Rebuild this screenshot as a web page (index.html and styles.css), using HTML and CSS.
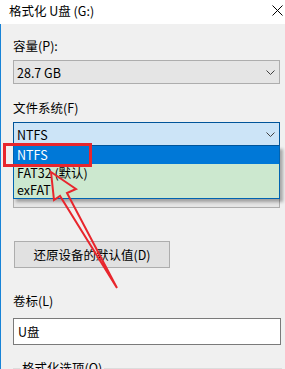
FILE: index.html
```html
<!DOCTYPE html>
<html lang="zh-CN">
<head>
    <meta charset="UTF-8">
    <title>格式化 U盘 (G:)</title>
    <link rel="stylesheet" href="styles.css">
</head>
<body>
    <div class="titlebar">
        <span class="title">格式化 U盘 (G:)</span>
        <svg class="close" width="11" height="11" viewBox="0 0 11 11">
            <path d="M0.5 0.5L10.5 10.5M10.5 0.5L0.5 10.5" stroke="#000" stroke-width="1"/>
        </svg>
    </div>

    <div class="dialog">
        <div class="label">容量(P):</div>
        <div class="combo">
            <span>28.7 GB</span>
            <svg class="chevron" width="9" height="5" viewBox="0 0 9 5"><path d="M0.5 0.5L4.5 4.5L8.5 0.5" fill="none" stroke="#404040"/></svg>
        </div>

        <div class="label gap">文件系统(F)</div>
        <div class="combo-wrap">
            <div class="combo focused">
                <span>NTFS</span>
                <svg class="chevron" width="9" height="5" viewBox="0 0 9 5"><path d="M0.5 0.5L4.5 4.5L8.5 0.5" fill="none" stroke="#404040"/></svg>
            </div>
            <ul class="droplist">
                <li class="selected">NTFS</li>
                <li>FAT32 (默认)</li>
                <li>exFAT</li>
            </ul>
        </div>

        <!-- allocation size row, hidden under the open list -->
        <div class="label gap covered">分配单元大小(A)</div>
        <div class="combo"></div>

        <button class="restore">还原设备的默认值(D)</button>

        <div class="label volume">卷标(L)</div>
        <div class="textbox">U盘</div>

        <fieldset class="group">
            <legend>格式化选项(O)</legend>
        </fieldset>
    </div>

    <!-- annotation drawn over the dialog -->
    <svg class="marks" width="285" height="369" viewBox="0 0 285 369">
        <rect x="4.5" y="144.5" width="86" height="21" fill="none" stroke="#e8262d" stroke-width="3"/>
        <polygon points="51,172 76,189 67,193 117,288 60,196 54,200" fill="none" stroke="#e8262d" stroke-width="2" stroke-linejoin="miter"/>
    </svg>
</body>
</html>
```

FILE: styles.css
```css
body {
    margin: 0;
    width: 285px;
    height: 369px;
    overflow: hidden;
    position: relative;
    background-color: #f0f0f0;
    font-family: "Noto Sans CJK SC", "Noto Sans", sans-serif;
    font-size: 12.5px;
    color: #000;
}
.titlebar {
    height: 24px;
    background-color: #fff;
    display: flex;
    align-items: center;
    justify-content: space-between;
    padding: 0 2px 0 9px;
}
.title {
    line-height: 16px;
    margin-top: -3px;
}
.close {
    margin-top: -4px;
}
.dialog {
    height: 345px;
    overflow: hidden;
    border-left: 1px solid #1883d7;
    padding: 14px 5px 0 12px;
    box-sizing: border-box;
}
.label {
    line-height: 16px;
    margin-bottom: 6px;
}
.label.gap {
    margin-top: 16px;
}
.label.covered {
    visibility: hidden;
}
.label.volume {
    margin-top: 25px;
    margin-bottom: 9px;
}
.combo {
    height: 24px;
    box-sizing: border-box;
    border: 1px solid #adadad;
    background-color: #e5e5e5;
    display: flex;
    align-items: center;
    justify-content: space-between;
    padding: 0 4px 0 3px;
}
.combo.focused {
    background-color: #cce4f7;
    border-color: #005499;
}
.combo-wrap {
    position: relative;
}
.droplist {
    position: absolute;
    top: 100%;
    left: 0;
    right: 0;
    margin: 0;
    padding: 0;
    list-style: none;
    background-color: #cce8cf;
    border: 1px solid #0063b1;
    border-top: none;
    box-shadow: 3px 3px 3px rgba(0,0,0,0.3);
    z-index: 2;
}
.droplist li {
    height: 17px;
    line-height: 17px;
    padding-left: 3px;
}
.droplist li.selected {
    height: 18px;
    line-height: 18px;
    background-color: #0078d7;
    color: #fff;
}
.restore {
    display: block;
    margin: 33px 0 0 1px;
    width: 156px;
    height: 27px;
    border: 1px solid #adadad;
    background-color: #e1e1e1;
    font-family: inherit;
    font-size: 12.5px;
    color: #000;
    padding: 0;
}
.textbox {
    height: 27px;
    box-sizing: border-box;
    border: 1px solid #7a7a7a;
    background-color: #fff;
    line-height: 25px;
    padding-left: 4px;
    margin-right: -1px;
}
.group {
    margin: 16px -2px 0 0;
    border: 1px solid #dcdcdc;
    padding: 0 0 0 6px;
    height: 40px;
}
.group legend {
    padding: 0 2px;
    line-height: 14px;
}
.marks {
    position: absolute;
    top: 0;
    left: 0;
    z-index: 3;
    pointer-events: none;
}
```
